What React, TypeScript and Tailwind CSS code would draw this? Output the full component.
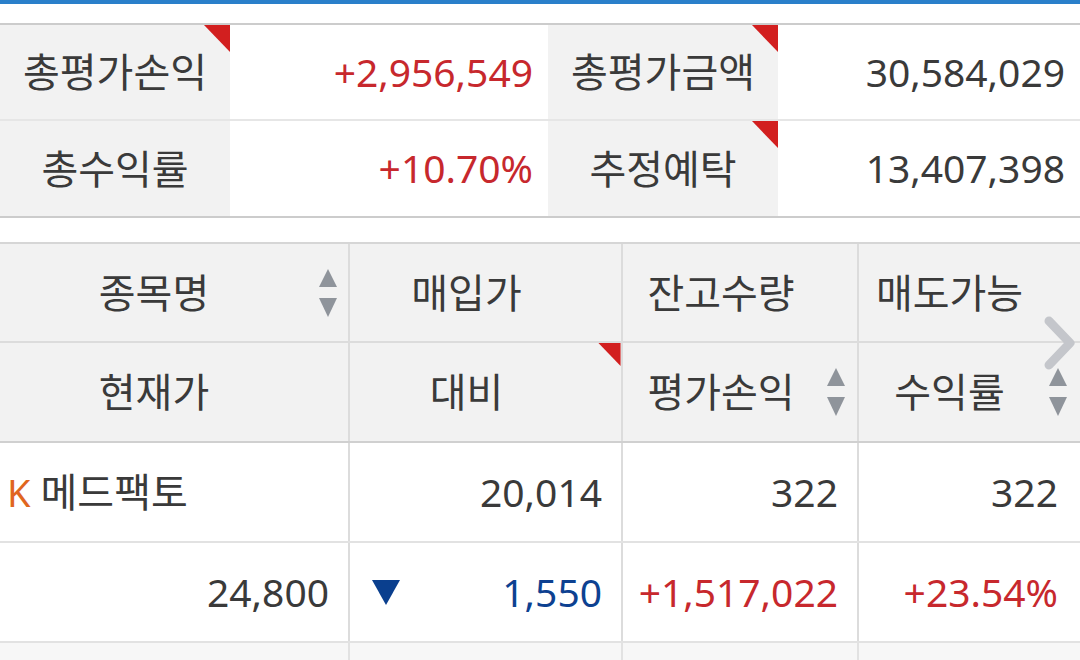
const KR = "font-['Noto_Sans','Noto_Sans_CJK_KR',sans-serif]"

function Corner({ className = "" }: { className?: string }) {
  return (
    <svg className={`absolute top-0 right-0 ${className}`} width="26" height="27" viewBox="0 0 26 27">
      <polygon points="0,0 26,0 26,27" fill="#d21f1f" />
    </svg>
  )
}

function SortArrows({ right }: { right: string }) {
  return (
    <div className={`absolute top-1/2 -translate-y-1/2 flex flex-col gap-[11px] ${right}`}>
      <svg width="18" height="18" viewBox="0 0 18 18">
        <polygon points="9,0 18,18 0,18" fill="#8f949b" />
      </svg>
      <svg width="18" height="19" viewBox="0 0 18 19">
        <polygon points="0,0 18,0 9,19" fill="#8f949b" />
      </svg>
    </div>
  )
}

type SummaryRow = {
  l1: string
  v1: string
  c1: boolean
  l2: string
  v2: string
  c2: boolean
}

const summary: SummaryRow[] = [
  { l1: "총평가손익", v1: "+2,956,549", c1: true, l2: "총평가금액", v2: "30,584,029", c2: true },
  { l1: "총수익률", v1: "+10.70%", c1: false, l2: "추정예탁", v2: "13,407,398", c2: true },
]

export default function App() {
  return (
    <div className={`w-[1080px] h-[660px] overflow-hidden bg-white text-[#3a3a3a] ${KR}`}>
      <div className="h-[4px] bg-[#2a7fca]" />
      <div className="h-[19px]" />

      {/* Summary */}
      <div className="border-t-2 border-b-2 border-[#cccccc]">
        {summary.map((r, i) => (
          <div
            key={r.l1}
            className={`flex ${i === 0 ? "h-[96px] border-b-2 border-[#e6e6e6]" : "h-[95px]"}`}
          >
            <div className="relative w-[230px] bg-[#f2f2f2] flex items-center justify-center text-[40px]">
              {r.l1}
              {r.c1 && <Corner />}
            </div>
            <div className="w-[318px] flex items-center justify-end pr-[15px] text-[39px] text-[#c7282d]">
              {r.v1}
            </div>
            <div className="relative w-[230px] bg-[#f2f2f2] flex items-center justify-center text-[40px]">
              {r.l2}
              {r.c2 && <Corner />}
            </div>
            <div className="flex-1 flex items-center justify-end pr-[15px] text-[39px]">{r.v2}</div>
          </div>
        ))}
      </div>

      <div className="h-[24px]" />

      {/* Holdings table */}
      <div className="relative border-t-2 border-[#d6d6d6]">
        <div className="bg-[#f2f2f2] text-[40px]">
          <div className="flex h-[99px] border-b-2 border-[#dcdcdc]">
            <div className="relative w-[350px] border-r-2 border-[#dcdcdc] flex items-center justify-center pr-[40px]">
              종목명
              <SortArrows right="right-[11px]" />
            </div>
            <div className="w-[273px] border-r-2 border-[#dcdcdc] flex items-center justify-center pr-[38px]">
              매입가
            </div>
            <div className="w-[236px] border-r-2 border-[#dcdcdc] flex items-center justify-center pr-[38px]">
              잔고수량
            </div>
            <div className="flex-1 flex items-center justify-center pr-[40px]">매도가능</div>
          </div>
          <div className="flex h-[100px] border-b-2 border-[#d0d0d0]">
            <div className="w-[350px] border-r-2 border-[#dcdcdc] flex items-center justify-center pr-[40px]">
              현재가
            </div>
            <div className="relative w-[273px] border-r-2 border-[#dcdcdc] flex items-center justify-center pr-[38px]">
              대비
              <Corner className="w-[23px] h-[23px]" />
            </div>
            <div className="relative w-[236px] border-r-2 border-[#dcdcdc] flex items-center justify-center pr-[38px]">
              평가손익
              <SortArrows right="right-[12px]" />
            </div>
            <div className="relative flex-1 flex items-center justify-center pr-[40px]">
              수익률
              <SortArrows right="right-[13px]" />
            </div>
          </div>
        </div>

        <div className="text-[39px]">
          <div className="flex h-[100px] border-b-2 border-[#e2e2e2]">
            <div className="w-[350px] border-r-2 border-[#dcdcdc] flex items-center pl-[7px] text-[40px]">
              <span className="text-[#e0661e] text-[38px] mr-[10px]">K</span>메드팩토
            </div>
            <div className="w-[273px] border-r-2 border-[#dcdcdc] flex items-center justify-end pr-[19px]">
              20,014
            </div>
            <div className="w-[236px] border-r-2 border-[#dcdcdc] flex items-center justify-end pr-[19px]">
              322
            </div>
            <div className="flex-1 flex items-center justify-end pr-[22px]">322</div>
          </div>
          <div className="flex h-[100px] border-b-2 border-[#e2e2e2]">
            <div className="w-[350px] border-r-2 border-[#dcdcdc] flex items-center justify-end pr-[19px]">
              24,800
            </div>
            <div className="w-[273px] border-r-2 border-[#dcdcdc] flex items-center justify-between pl-[22px] pr-[19px] text-[#0d4191]">
              <svg width="28" height="25" viewBox="0 0 28 25">
                <polygon points="0,0 28,0 14,25" fill="#0a3f8e" />
              </svg>
              1,550
            </div>
            <div className="w-[236px] border-r-2 border-[#dcdcdc] flex items-center justify-end pr-[19px] text-[#c7282d]">
              +1,517,022
            </div>
            <div className="flex-1 flex items-center justify-end pr-[22px] text-[#c7282d]">+23.54%</div>
          </div>
          <div className="flex h-[40px] bg-[#f7f7f7]">
            <div className="w-[350px] border-r-2 border-[#e2e2e2]" />
            <div className="w-[273px] border-r-2 border-[#e2e2e2]" />
            <div className="w-[236px] border-r-2 border-[#e2e2e2]" />
            <div className="flex-1" />
          </div>
        </div>

        {/* scroll hint chevron */}
        <svg className="absolute left-[1040px] top-[72px]" width="40" height="54" viewBox="0 0 40 54">
          <polyline
            points="9,5 30,27 9,49"
            fill="none"
            stroke="#c4c6cb"
            strokeWidth="9"
            strokeLinecap="round"
            strokeLinejoin="round"
          />
        </svg>
      </div>
    </div>
  )
}
